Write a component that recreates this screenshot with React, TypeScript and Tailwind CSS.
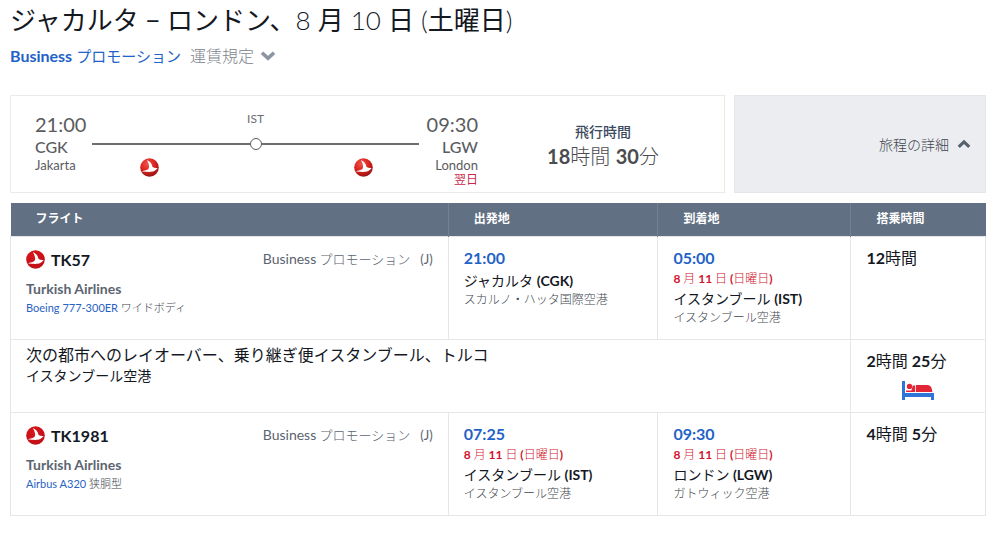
import React from "react";
import { useId } from "react";

function AirlineLogo({ className, glossy = false }: { className: string; glossy?: boolean }) {
  const id = useId();
  return (
    <svg viewBox="0 0 20 20" className={className} role="img" aria-label="Turkish Airlines">
      <defs>
        <radialGradient id={id} cx="0.4" cy="0.3" r="0.75">
          <stop offset="0" stopColor={glossy ? "#f0554b" : "#d8161c"} />
          <stop offset="0.5" stopColor={glossy ? "#dc2420" : "#cc1219"} />
          <stop offset="1" stopColor={glossy ? "#8f1210" : "#c00f16"} />
        </radialGradient>
      </defs>
      <circle cx="10" cy="10" r="9.8" fill={`url(#${id})`} />
      <path
        d="M7.2 2.2C10.4 3.6 12.8 6.2 13.2 9.6C14.8 10.4 16.6 10.6 18.6 10.4C16.8 12.6 14.6 14.2 11.8 14.6C8.4 15.1 5 14 1.4 14.4C4.2 12.4 8.6 13.2 9.4 10.4C10 7.8 8.8 4.8 7.2 2.2Z"
        fill="#fff"
      />
    </svg>
  );
}

function BedIcon() {
  return (
    <svg viewBox="0 0 32 19" className="mx-auto h-[19px] w-8" aria-hidden="true">
      <path d="M0 0h3v12h29v7h-3v-3H3v3H0z" fill="#2f74d8" />
      <circle cx="7.5" cy="5.4" r="2.7" fill="#e32636" />
      <path d="M4 11V9.4h5.4l1.4-4.8h2.4V11zM14 4h11.5c3 0 4.8 3 4.8 7H14z" fill="#e32636" />
    </svg>
  );
}

function Chevron({ up = false, className }: { up?: boolean; className: string }) {
  return (
    <svg viewBox="0 0 16 10" className={className} fill="none" stroke="currentColor" strokeWidth="3.6" aria-hidden="true">
      <path d={up ? "M2 8.2L8 2.6L14 8.2" : "M2 1.8L8 7.4L14 1.8"} />
    </svg>
  );
}

type Stop = { time: string; nextDay?: boolean; city: string; code: string; airport: string };

function StopCell({ stop }: { stop: Stop }) {
  return (
    <td className="border border-[#e4e6e9] px-[15px] pt-[9px] align-top">
      <div className="text-[16px] leading-6 font-bold text-[#1f62c8]">{stop.time}</div>
      {stop.nextDay && (
        <div className="text-[12px] leading-[18px] font-bold text-[#d0142c]">
          8 <span className="font-light">月</span> 11 <span className="font-light">日</span> (
          <span className="font-light">日曜日</span>)
        </div>
      )}
      <div className="text-[14px] leading-[22px] text-[#14181f]">
        {stop.city} <span className="font-bold">({stop.code})</span>
      </div>
      <div className="text-[12px] leading-4 font-light text-[#40464e]">{stop.airport}</div>
    </td>
  );
}

function Duration({ parts }: { parts: [string, string][] }) {
  return (
    <>
      {parts.map(([value, unit], i) => (
        <React.Fragment key={unit}>
          {i > 0 && " "}
          <span className="font-bold">{value}</span>
          {unit}
        </React.Fragment>
      ))}
    </>
  );
}

type Flight = {
  number: string;
  aircraft: string;
  body: string;
  from: Stop;
  to: Stop;
  duration: [string, string][];
};

function FlightRow({ flight }: { flight: Flight }) {
  return (
    <tr className="h-[103px]">
      <td className="border border-[#e4e6e9] px-[15px] pt-[11px] align-top">
        <div className="flex items-start justify-between">
          <div className="flex items-center gap-[6px]">
            <AirlineLogo className="size-[19px]" />
            <span className="text-[16px] leading-6 font-bold text-[#14181f]">{flight.number}</span>
          </div>
          <div className="flex gap-[10px] text-[13px] leading-[22px] text-[#5b6470]">
            <span>
              <span className="text-[14px]">Business</span> <span className="font-light">プロモーション</span>
            </span>
            <span>(J)</span>
          </div>
        </div>
        <div className="mt-[7px] text-[14px] leading-5 font-bold text-[#5b6470]">Turkish Airlines</div>
        <div className="text-[11px] leading-[18px] text-[#40464e]">
          <a href="#" className="text-[#2a62c4]">
            {flight.aircraft}
          </a>{" "}
          <span className="font-light">{flight.body}</span>
        </div>
      </td>
      <StopCell stop={flight.from} />
      <StopCell stop={flight.to} />
      <td className="border border-[#e4e6e9] px-[15px] pt-[9px] align-top text-[16px] leading-6 text-[#14181f]">
        <Duration parts={flight.duration} />
      </td>
    </tr>
  );
}

const flights: Flight[] = [
  {
    number: "TK57",
    aircraft: "Boeing 777-300ER",
    body: "ワイドボディ",
    from: { time: "21:00", city: "ジャカルタ", code: "CGK", airport: "スカルノ・ハッタ国際空港" },
    to: { time: "05:00", nextDay: true, city: "イスタンブール", code: "IST", airport: "イスタンブール空港" },
    duration: [["12", "時間"]],
  },
  {
    number: "TK1981",
    aircraft: "Airbus A320",
    body: "狭胴型",
    from: { time: "07:25", nextDay: true, city: "イスタンブール", code: "IST", airport: "イスタンブール空港" },
    to: { time: "09:30", nextDay: true, city: "ロンドン", code: "LGW", airport: "ガトウィック空港" },
    duration: [
      ["4", "時間"],
      ["5", "分"],
    ],
  },
];

export default function App() {
  return (
    <main className="bg-white pr-[15px] pb-4 pl-[10px] font-['Lato','Noto_Sans_CJK_JP',sans-serif] text-[#14181f]">
      <h1 className="pt-1 text-[26px] leading-8 font-light">
        <span className="font-normal">ジャカルタ − ロンドン、</span>8 <span className="font-normal">月</span> 10{" "}
        <span className="font-normal">日</span> (<span className="font-normal">土曜日</span>)
      </h1>
      <div className="mt-2 flex items-center gap-[9px] text-[16px] leading-6">
        <span className="text-[#1f62c8]">
          <span className="font-bold">Business</span> <span className="text-[15px]">プロモーション</span>
        </span>
        <button type="button" className="flex items-center gap-[6px] font-light text-[#7c838c]">
          運賃規定
          <Chevron className="h-[10px] w-4 text-[#8b95a1]" />
        </button>
      </div>

      <section className="mt-[27px] flex min-h-[98px] gap-[9px]">
        <div className="flex grow border border-[#e9eaec] pl-6">
          <div className="pt-4 text-[#5a5c60]">
            <div className="text-[20px] leading-6">21:00</div>
            <div className="text-[16px] leading-[22px] font-medium">CGK</div>
            <div className="text-[13px] leading-[14px]">Jakarta</div>
          </div>
          <div className="ml-[6px] flex grow flex-col pt-[15px]">
            <div className="text-center text-[12px] leading-4 text-[#6b6d71]">IST</div>
            <div className="mt-[11px] flex items-center">
              <span className="h-[2px] grow bg-[#6b6d71]" />
              <span className="size-3 rounded-full border border-[#5a5c60] bg-white" />
              <span className="h-[2px] grow bg-[#6b6d71]" />
            </div>
            <div className="mt-2 flex justify-between pr-[46px] pl-12">
              <AirlineLogo glossy className="size-[19px]" />
              <AirlineLogo glossy className="size-[19px]" />
            </div>
          </div>
          <div className="ml-2 pt-4 text-right text-[#5a5c60]">
            <div className="text-[20px] leading-6">09:30</div>
            <div className="text-[16px] leading-[22px] font-medium">LGW</div>
            <div className="text-[13px] leading-[14px]">London</div>
            <div className="text-[12px] leading-4 text-[#c8284a]">翌日</div>
          </div>
          <div className="w-[246px] shrink-0 pt-[26px] pl-1 text-center">
            <div className="text-[14px] leading-5 font-medium text-[#3c4b5f]">飛行時間</div>
            <div className="mt-[2px] text-[20px] leading-6 font-light text-[#4a4c50]">
              <Duration
                parts={[
                  ["18", "時間"],
                  ["30", "分"],
                ]}
              />
            </div>
          </div>
        </div>
        <button
          type="button"
          className="flex w-[252px] shrink-0 items-center justify-end gap-2 border border-[#e3e5ea] bg-[#ecedf1] pr-[14px] text-[14px] font-light text-[#40464e]"
        >
          旅程の詳細
          <Chevron up className="h-[10px] w-[14px] text-[#56616f]" />
        </button>
      </section>

      <table className="mt-[10px] w-full table-fixed border-collapse text-left">
        <thead>
          <tr className="h-[33px] bg-[#627083] text-[12px] text-white">
            <th className="w-[44.9%] border-r border-[#748192] pl-[25px] font-bold">フライト</th>
            <th className="w-[21.5%] border-r border-[#748192] pl-[25px] font-bold">出発地</th>
            <th className="w-[19.8%] border-r border-[#748192] pl-[25px] font-bold">到着地</th>
            <th className="pl-[25px] font-bold">搭乗時間</th>
          </tr>
        </thead>
        <tbody>
          <FlightRow flight={flights[0]} />
          <tr className="h-[73px]">
            <td colSpan={3} className="border border-[#e4e6e9] px-[15px] pt-1 align-top">
              <div className="text-[16px] leading-[22px]">
                次の都市へのレイオーバー、乗り継ぎ便イスタンブール、トルコ
              </div>
              <div className="text-[14px] leading-5">イスタンブール空港</div>
            </td>
            <td className="border border-[#e4e6e9] px-[15px] pt-[9px] align-top text-[16px] leading-6">
              <Duration
                parts={[
                  ["2", "時間"],
                  ["25", "分"],
                ]}
              />
              <div className="mt-2">
                <BedIcon />
              </div>
            </td>
          </tr>
          <FlightRow flight={flights[1]} />
        </tbody>
      </table>
    </main>
  );
}
